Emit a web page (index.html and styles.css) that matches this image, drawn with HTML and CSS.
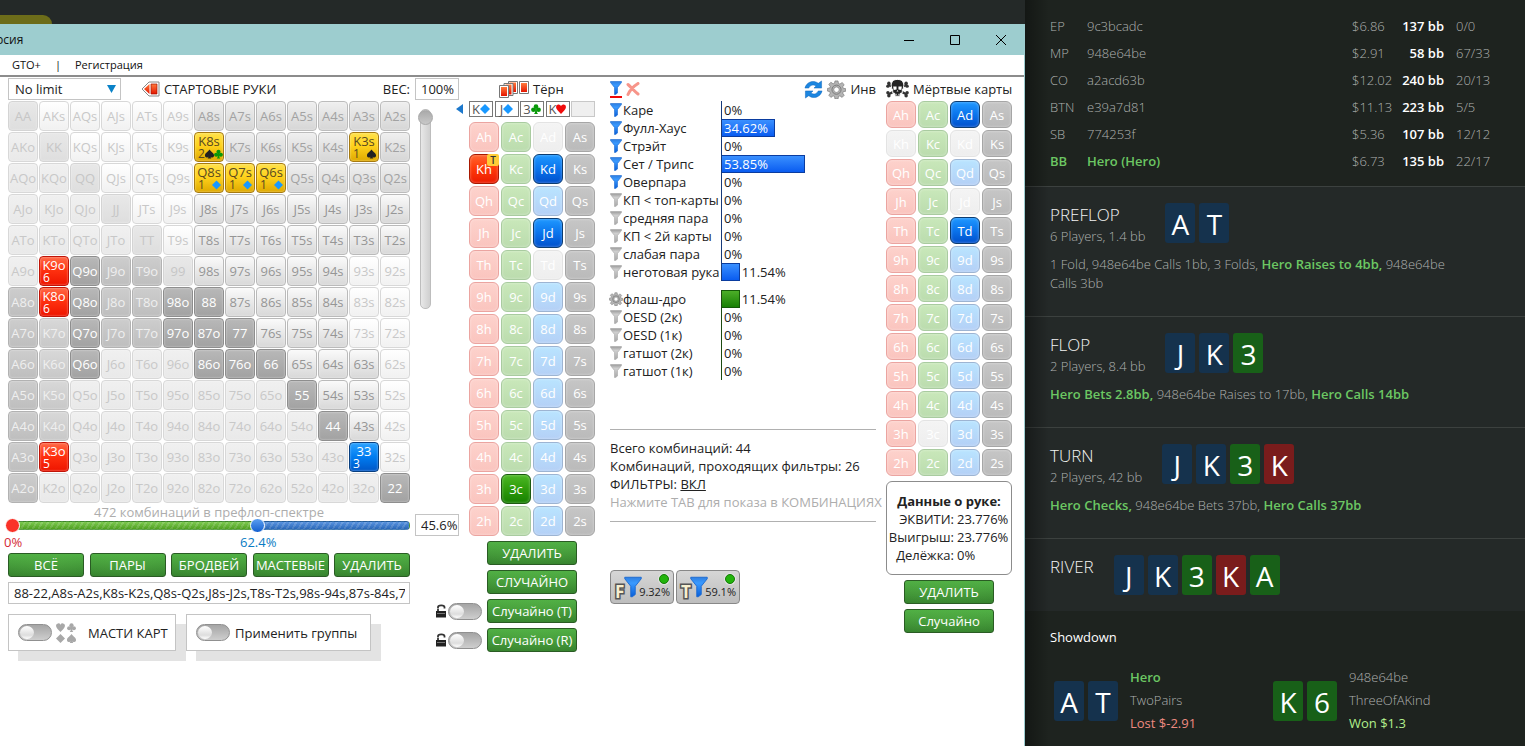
FILE: index.html
```html
<!DOCTYPE html>
<html lang="ru">
<head>
<meta charset="utf-8">
<title>Эквити калькулятор</title>
<link rel="stylesheet" href="styles.css">
</head>
<body>
<svg class="defs" aria-hidden="true">
  <defs>
    <linearGradient id="g-blue" x1="0" y1="0" x2="0" y2="1"><stop offset="0" stop-color="#2f7fe0"/><stop offset=".3" stop-color="#3a9aff"/><stop offset="1" stop-color="#0a5fd8"/></linearGradient>
    <linearGradient id="g-grey" x1="0" y1="0" x2="0" y2="1"><stop offset="0" stop-color="#9a9a9a"/><stop offset=".3" stop-color="#cfcfcf"/><stop offset="1" stop-color="#a8a8a8"/></linearGradient>
    <linearGradient id="g-red" x1="0" y1="0" x2="0" y2="1"><stop offset="0" stop-color="#ff7a3c"/><stop offset="1" stop-color="#e41500"/></linearGradient>
  </defs>
  <symbol id="diamond" viewBox="0 0 10 10"><path d="M5 0 10 5 5 10 0 5Z"/></symbol>
  <symbol id="heart" viewBox="0 0 10 10"><path d="M5 10C3 7.500 0 5.500 0 3A2.600 2.600 0 0 1 5 2 2.600 2.600 0 0 1 10 3C10 5.500 7 7.500 5 10Z"/></symbol>
  <symbol id="club" viewBox="0 0 10 10"><circle cx="5" cy="2.500" r="2.300"/><circle cx="2.400" cy="5.800" r="2.300"/><circle cx="7.600" cy="5.800" r="2.300"/><path d="M4.300 4h1.400L6 8.500 7 10H3L4 8.500Z"/></symbol>
  <symbol id="spade" viewBox="0 0 10 10"><path d="M5 0C6.500 2.500 10 4 10 6.300A2.300 2.300 0 0 1 5.600 7.500L7 10H3L4.400 7.500A2.300 2.300 0 0 1 0 6.300C0 4 3.500 2.500 5 0Z"/></symbol>
  <symbol id="funnel" viewBox="0 0 12 14"><path d="M.5.5h11v1L7.500 6.500v5.500l-2 1.500h-1v-7L.5 1.500Z"/></symbol>
  <symbol id="gear" viewBox="0 0 20 20"><path fill-rule="evenodd" d="M8.400 1h3.200l.5 2.700 1.500.6 2.300-1.600 2.200 2.200-1.600 2.300.6 1.500 2.700.5v2.600l-2.700.5-.6 1.500 1.600 2.300-2.200 2.200-2.300-1.600-1.500.6-.5 2.700H8.400l-.5-2.700-1.500-.6-2.300 1.600-2.200-2.200 1.600-2.300-.6-1.500L.4 11.600V8.900l2.500-.5.6-1.500L1.900 4.600l2.200-2.200 2.300 1.600 1.500-.6ZM10 7.300a2.900 2.900 0 1 0 0 5.800 2.900 2.900 0 0 0 0-5.800Z"/><circle cx="10" cy="10.200" r="4.800" fill="none" stroke-width="1"/></symbol>
  <symbol id="lock" viewBox="0 0 12 14"><path d="M1 7h10v6.500H1Z" fill="#222"/><path d="M2 9.500h8" stroke="#777"/><path d="M3 7V5M3 4.500V3.200C3 .8 9.500.8 9.500 3.200V4.500" fill="none" stroke="#333" stroke-width="1.800"/></symbol>
</svg>

<div class="desktop">
  <div class="backdrop">
    <div class="tab-hint"></div>
    <main class="window">
      <header class="titlebar">
        <span class="caption">рсия</span>
        <div class="window-buttons">
          <button aria-label="Свернуть"><svg viewBox="0 0 10 10"><path d="M0 5.500h10"/></svg></button>
          <button aria-label="Развернуть"><svg viewBox="0 0 10 10"><path d="M.5.5h9v9h-9Z"/></svg></button>
          <button aria-label="Закрыть"><svg viewBox="0 0 10 10"><path d="M0 0 10 10M10 0 0 10"/></svg></button>
        </div>
      </header>
      <nav class="menubar"><a href="#gto">GTO+</a><span>|</span><a href="#reg">Регистрация</a></nav>

      <div class="workspace">
        <section class="range-col">
          <div class="head range-head">
            <select aria-label="Лимит"><option>No limit</option></select>
            <svg class="hand-icon" viewBox="0 0 19 16"><path d="M8 1 1 8l7 7h10V1Z" fill="#fff" stroke="#888"/><path d="M8.500 3v10L3 8Z" fill="url(#g-red)"/><path d="M10 3h6v10h-6Z" fill="url(#g-red)" stroke="#a41200" stroke-width=".7"/></svg>
            <h2>СТАРТОВЫЕ РУКИ</h2>
            <label class="weight-label" for="weight">ВЕС:</label>
          </div>
          <div class="matrix" id="matrix"></div>
          <p class="combo-count">472 комбинаций в префлоп-спектре</p>
          <div class="band">
            <div class="band-track"></div>
            <input class="low" type="range" min="0" max="100" value="0" aria-label="Нижняя граница">
            <input class="high" type="range" min="0" max="100" step="0.1" value="62.4" aria-label="Верхняя граница">
          </div>
          <div class="band-labels"><span class="low-text">0%</span><span class="high-text">62.4%</span></div>
          <div class="presets">
            <button class="green">ВСЁ</button><button class="green">ПАРЫ</button><button class="green">БРОДВЕЙ</button><button class="green">МАСТЕВЫЕ</button><button class="green">УДАЛИТЬ</button>
          </div>
          <input class="field range-text" aria-label="Спектр" value="88-22,A8s-A2s,K8s-K2s,Q8s-Q2s,J8s-J2s,T8s-T2s,98s-94s,87s-84s,76s-74s">
          <div class="options">
            <label class="option suits-option"><input type="checkbox" class="switch">
              <span class="suit-set"><svg><use href="#heart"/></svg><svg><use href="#club"/></svg><svg><use href="#diamond"/></svg><svg><use href="#spade"/></svg></span>
              <span>МАСТИ КАРТ</span></label>
            <label class="option group-option"><input type="checkbox" class="switch"><span>Применить группы</span></label>
          </div>
        </section>

        <section class="board-area">
          <div class="board-top">
            <div class="weight-col">
              <input class="field percent" id="weight" value="100%">
              <input class="weight-slider" type="range" min="0" max="100" value="100" aria-label="Вес">
              <input class="field percent" aria-label="Процент рук" value="45.6%">
            </div>
            <div class="board-col">
              <div class="head board-head">
                <svg viewBox="0 0 30 18"><g stroke="#777" fill="#fff"><path d="M9.500 1.500h9v12h-9Z"/><path d="M10.500 2.500h6.500v9.500h-6.500Z" fill="url(#g-red)" stroke="none"/><path d="M5 3.500h9v12H5Z"/><path d="M6.500 4.500h6v10h-6Z" fill="url(#g-red)" stroke="none"/><path d="M.5 5.500h9v12h-9Z"/><path d="M2 7h6v9H2Z" fill="url(#g-red)" stroke="none"/><path d="M20.500 1.500h9v12h-9Z"/><path d="M22 3h6v9h-6Z" fill="url(#g-red)" stroke="none"/></g></svg>
                <h2>Тёрн</h2>
              </div>
              <div class="board-cards">
                <button class="prev" aria-label="Назад"><svg viewBox="0 0 7 10"><path d="M7 0v10L0 5Z"/></svg></button>
                <span class="mini">K<svg class="blue"><use href="#diamond"/></svg></span>
                <span class="mini">J<svg class="blue"><use href="#diamond"/></svg></span>
                <span class="mini">3<svg class="grn"><use href="#club"/></svg></span>
                <span class="mini">K<svg class="red"><use href="#heart"/></svg></span>
                <span class="mini empty"></span>
              </div>
              <div class="deck board-deck" id="board-deck"></div>
            </div>
          </div>
          <div class="board-actions">
            <button class="green">УДАЛИТЬ</button>
            <button class="green">СЛУЧАЙНО</button>
            <label class="keep"><svg><use href="#lock"/></svg><input type="checkbox" class="switch" aria-label="Закрепить тёрн"></label><button class="green">Случайно (T)</button>
            <label class="keep"><svg><use href="#lock"/></svg><input type="checkbox" class="switch" aria-label="Закрепить ривер"></label><button class="green">Случайно (R)</button>
          </div>
        </section>

        <section class="filters">
          <div class="head filter-head">
            <button aria-label="Фильтр" class="icon-btn underline"><svg class="funnel on"><use href="#funnel"/></svg></button>
            <button aria-label="Сбросить" class="icon-btn"><svg class="clear" viewBox="0 0 14 14"><path d="M2 2.500C5 5 8 9 12 12M12 1.500C8 4 4 8 2 12.500"/></svg></button>
            <button aria-label="Обновить" class="icon-btn refresh"><svg viewBox="0 0 20 20"><path d="M1 8.500C2.500 2 10 -.5 15 3.500L18.500 1v7.500H10.500l2.200-2.200C9.800 4.300 6.500 5.200 5 8.500ZM19 11.500C17.500 18 10 20.500 5 16.500L1.500 19v-7.500h8l-2.200 2.200c2.900 2 6.200 1.100 7.700-2.200Z"/></svg></button>
            <button aria-label="Настройки" class="icon-btn"><svg class="gear"><use href="#gear"/></svg></button>
            <button class="icon-btn">Инв</button>
          </div>
          <div class="stats" id="made"></div>
          <div class="stats draws" id="draws"></div>
          <div class="summary">
            <p>Всего комбинаций: 44</p>
            <p>Комбинаций, проходящих фильтры: 26</p>
            <p>ФИЛЬТРЫ: <a href="#filters">ВКЛ</a></p>
            <p class="hint">Нажмите TAB для показа в КОМБИНАЦИЯХ</p>
          </div>
          <div class="street-buttons">
            <button><b>F</b><svg class="funnel on"><use href="#funnel"/></svg><span>9.32%</span><i></i></button>
            <button><b>T</b><svg class="funnel on"><use href="#funnel"/></svg><span>59.1%</span><i></i></button>
          </div>
        </section>

        <section class="dead">
          <div class="head dead-head">
            <svg viewBox="0 0 24 20"><path d="M2 5 22 16M22 5 2 16" stroke="#333" stroke-width="2.500" fill="none"/><g fill="#333"><circle cx="3" cy="4" r="1.800"/><circle cx="2" cy="7" r="1.800"/><circle cx="21" cy="4" r="1.800"/><circle cx="22" cy="7" r="1.800"/><circle cx="2" cy="14" r="1.800"/><circle cx="3" cy="17" r="1.800"/><circle cx="22" cy="14" r="1.800"/><circle cx="21" cy="17" r="1.800"/></g><path d="M12 0c5 0 6.500 3 6.500 6.500 0 2-.6 3.500-1.500 4.500v3l-2 .5-.5 3h-5L9 14.500 7 14v-3C6 10 5.500 8.500 5.500 6.500 5.500 3 7 0 12 0Z" fill="#222" stroke="#fff" stroke-width="1"/><path d="M7.500 7.500h3.500v3l-3 .5ZM16.500 7.500H13v3l3 .5ZM11 12.500l1-1.500 1 1.500ZM10 15h1v1.500h-1ZM13 15h1v1.500h-1Z" fill="#fff"/></svg>
            <h2>Мёртвые карты</h2>
          </div>
          <div class="deck dead-deck" id="dead-deck"></div>
          <div class="hand-info">
            <h3>Данные о руке:</h3>
            <dl><dt>ЭКВИТИ:</dt><dd>23.776%</dd><dt>Выигрыш:</dt><dd>23.776%</dd><dt>Делёжка:</dt><dd>0%</dd></dl>
          </div>
          <div class="dead-actions"><button class="green">УДАЛИТЬ</button><button class="green">Случайно</button></div>
        </section>
      </div>
    </main>
  </div>

  <aside class="history" lang="en">
    <div class="players">
      <table>
        <tr><td>EP</td><td>9c3bcadc</td><td>$6.86</td><td>137 bb</td><td>0/0</td></tr>
        <tr><td>MP</td><td>948e64be</td><td>$2.91</td><td>58 bb</td><td>67/33</td></tr>
        <tr><td>CO</td><td>a2acd63b</td><td>$12.02</td><td>240 bb</td><td>20/13</td></tr>
        <tr><td>BTN</td><td>e39a7d81</td><td>$11.13</td><td>223 bb</td><td>5/5</td></tr>
        <tr><td>SB</td><td>774253f</td><td>$5.36</td><td>107 bb</td><td>12/12</td></tr>
        <tr class="hero-row"><td>BB</td><td>Hero (Hero)</td><td>$6.73</td><td>135 bb</td><td>22/17</td></tr>
      </table>
    </div>
    <section class="street">
      <div class="street-head"><div><h2>PREFLOP</h2><p>6 Players, 1.4 bb</p></div><div class="cards"><span class="d">A</span><span class="d">T</span></div></div>
      <p class="log">1 Fold, 948e64be Calls 1bb, 3 Folds, <b>Hero Raises to 4bb,</b> 948e64be Calls 3bb</p>
    </section>
    <section class="street">
      <div class="street-head"><div><h2>FLOP</h2><p>2 Players, 8.4 bb</p></div><div class="cards"><span class="d">J</span><span class="d">K</span><span class="c">3</span></div></div>
      <p class="log"><b>Hero Bets 2.8bb,</b> 948e64be Raises to 17bb, <b>Hero Calls 14bb</b></p>
    </section>
    <section class="street">
      <div class="street-head"><div><h2>TURN</h2><p>2 Players, 42 bb</p></div><div class="cards"><span class="d">J</span><span class="d">K</span><span class="c">3</span><span class="h">K</span></div></div>
      <p class="log"><b>Hero Checks,</b> 948e64be Bets 37bb, <b>Hero Calls 37bb</b></p>
    </section>
    <section class="street river">
      <div class="street-head"><div><h2>RIVER</h2></div><div class="cards"><span class="d">J</span><span class="d">K</span><span class="c">3</span><span class="h">K</span><span class="c">A</span></div></div>
    </section>
    <section class="showdown">
      <h3>Showdown</h3>
      <div class="results">
        <div class="result"><div class="cards"><span class="d">A</span><span class="d">T</span></div><div><p class="hero">Hero</p><p>TwoPairs</p><p class="lost">Lost $-2.91</p></div></div>
        <div class="result"><div class="cards"><span class="c">K</span><span class="c">6</span></div><div><p>948e64be</p><p>ThreeOfAKind</p><p class="won">Won $1.3</p></div></div>
      </div>
    </section>
  </aside>
</div>
<script src="app.js"></script>
</body>
</html>
```
FILE: app.js
```js
const ranks = 'AKQJT98765432';

// One letter per hand: p f o = outside the range (pair, suited, offsuit),
// t s = suited in range, l m n = grey shades, y r b = live combos.
const shades = [
  'pfffffttttttt',
  'opffffyttttyt',
  'oopfffyyytttt',
  'ooopffsssssss',
  'oooopfsssssss',
  'ornmmpsssssff',
  'mrnmmnnssssff',
  'mlnmmnnnsssff',
  'mlnooonnnsssf',
  'mlooooooonssf',
  'mloooooooonsf',
  'mrooooooooobf',
  'mooooooooooon'
];
const live = {
  K8s: ['2', 'spade', 'club'], K3s: ['1', 'spade'],
  Q8s: ['1', 'diamond'], Q7s: ['1', 'diamond'], Q6s: ['1', 'diamond'],
  K9o: ['6'], K8o: ['6'], K3o: ['5'], 33: ['3']
};

const icon = (name, cls = name) => `<svg class="${cls}"><use href="#${name}"/></svg>`;

document.getElementById('matrix').innerHTML = shades.map((row, r) =>
  [...row].map((shade, c) => {
    const hand = r === c ? ranks[r] + ranks[r]
      : r < c ? ranks[r] + ranks[c] + 's' : ranks[c] + ranks[r] + 'o';
    const extra = live[hand];
    const body = extra
      ? `<span>${hand}</span><small>${extra[0]}<em>${extra.slice(1).map(s => icon(s)).join('')}</em></small>`
      : hand;
    return `<button class="hand ${shade}">${body}</button>`;
  }).join('')).join('');

function deck(id, picked, blocked, tag) {
  document.getElementById(id).innerHTML = [...ranks].map(rank =>
    [...'hcds'].map(suit => {
      const card = rank + suit;
      const state = picked.includes(card) ? 'picked' : blocked.includes(card) ? 'blocked' : '';
      return `<button class="card ${suit} ${state}">${card}${card === tag ? '<sup>T</sup>' : ''}</button>`;
    }).join('')).join('');
}
deck('board-deck', ['Kh', 'Kd', 'Jd', '3c'], ['Ad', 'Td'], 'Kh');
deck('dead-deck', ['Ad', 'Td'], ['Kh', 'Kd', 'Jd', '3c']);

function stats(id, rows) {
  document.getElementById(id).innerHTML = rows.map(([name, value, sign]) => {
    const mark = sign === 'gear' ? icon('gear', 'gear small') : icon('funnel', 'funnel ' + (sign || ''));
    const bar = value ? `<div class="bar" style="width:${value}%"></div>` : '';
    return `<div class="stat">${mark}<span class="name">${name}</span><div class="meter">${bar}<span class="value${value > 20 ? ' inside' : ''}">${value}%</span></div></div>`;
  }).join('');
}
stats('made', [
  ['Каре', 0, 'on'], ['Фулл-Хаус', 34.62, 'on'], ['Стрэйт', 0, 'on'],
  ['Сет / Трипс', 53.85, 'on'], ['Оверпара', 0, 'on'], ['КП &lt; топ-карты', 0],
  ['средняя пара', 0], ['КП &lt; 2й карты', 0], ['слабая пара', 0], ['неготовая рука', 11.54]
]);
stats('draws', [
  ['флаш-дро', 11.54, 'gear'], ['OESD (2к)', 0], ['OESD (1к)', 0],
  ['гатшот (2к)', 0], ['гатшот (1к)', 0]
]);
```
FILE: styles.css
```css
* { box-sizing: border-box; }
body { margin: 0; background: #1e231f; color: #222; font: 13px/18px "Open Sans", "Noto Sans", sans-serif; }
h2, h3, p, dl, dd { margin: 0; font: inherit; }
button, input, select { font: inherit; color: inherit; margin: 0; }
button { padding: 0; cursor: pointer; }
.defs { position: absolute; width: 0; height: 0; }

.desktop { display: grid; grid-template-columns: minmax(0, 41fr) minmax(0, 20fr); min-height: 100vh; }
.backdrop { display: flex; flex-direction: column; padding-top: 15px; background: #242928; }
.tab-hint { width: 52px; height: 9px; background: #6c6c19; border-radius: 0 12px 0 0; }
.window { flex: 1; background: #fff; border-right: 1px solid #9dcccf; }

.titlebar { display: flex; align-items: center; justify-content: space-between; height: 31px; background: #9dcdcf; color: #111; font-size: 12px; }
.caption { margin-left: -4px; }
.window-buttons { display: flex; gap: 1px; margin-right: 1px; }
.window-buttons button { display: flex; align-items: center; justify-content: center; width: 45px; height: 31px; border: 0; background: none; }
.window-buttons svg { width: 10px; height: 10px; fill: none; stroke: #000; overflow: visible; }
.menubar { display: flex; gap: 14px; height: 20px; padding-left: 12px; font-size: 11px; line-height: 20px; color: #111; }
.menubar a { color: inherit; text-decoration: none; }

.workspace { display: flex; border-top: 2px solid #8c8c8c; padding: 1px 12px 0 8px; }
.head { display: flex; align-items: center; height: 22px; white-space: nowrap; }
.field { height: 22px; padding: 0 4px 0 5px; border: 1px solid #c4c4c4; background: #fff; outline: 0; }

.range-col { width: 402px; flex: none; }
.range-head { gap: 4px; }
.range-head select { appearance: none; width: 113px; height: 22px; margin-right: 16px; padding: 0 6px; border: 1px solid #c4c4c4; background: url("data:image/svg+xml,%3Csvg xmlns='http://www.w3.org/2000/svg' width='9' height='8'%3E%3Cpath d='M0 0h9L4.5 8Z' fill='%230a82c8'/%3E%3C/svg%3E") no-repeat right 4px center #fff; }
.hand-icon { width: 19px; height: 16px; }
.weight-label { margin-left: auto; }
.matrix { display: grid; grid-template-columns: repeat(13, 30px); gap: 1px; margin-top: 1px; }
.hand { height: 30px; border: 1px solid; border-radius: 4px; line-height: 16px; white-space: nowrap; box-shadow: inset 0 0 2px rgba(255,255,255,.6); font-size: 13px; }
.hand.p { background: linear-gradient(#e8e8e8, #dedede); border-color: #d4d4d4; color: #c6c6c6; }
.hand.f { background: linear-gradient(#fff, #f1f1f1); border-color: #d8d8d8; color: #c8c8c8; }
.hand.o { background: linear-gradient(#f0f0f0, #e9e9e9); border-color: #d8d8d8; color: #c8c8c8; }
.hand.t { background: linear-gradient(#efefef, #d6d6d6); border-color: #bcbcbc; color: #a2a2a2; }
.hand.s { background: linear-gradient(#fafafa, #d8d8d8); border-color: #bababa; color: #969696; }
.hand.l { background: linear-gradient(#d8d8d8, #c8c8c8); border-color: #c0c0c0; color: #efefef; }
.hand.m { background: linear-gradient(#cdcdcd, #bebebe); border-color: #b2b2b2; color: #efefef; }
.hand.n { background: linear-gradient(#b8b8b8, #a2a2a2); border-color: #8e8e8e; color: #fff; }
.hand.y { background: linear-gradient(#ffe14a, #ffd21c 45%, #dfa900); border-color: #a67a10; color: #5a4a20; }
.hand.r { background: linear-gradient(#ff6a48, #ff3210 45%, #ee1500); border-color: #c01408; color: #fff; }
.hand.b { background: linear-gradient(#2aa2ff, #007cf0 50%, #0057c8); border-color: #083f80; color: #fff; }
.hand span { display: block; line-height: 14px; }
.hand small { display: flex; justify-content: space-between; padding: 0 2px 0 3px; font-size: 12px; line-height: 12px; }
.hand em { display: flex; align-items: center; }
.hand em svg { width: 9px; height: 10px; fill: #222; }
.hand em .club { fill: #089808; }
.hand em .diamond { fill: #1898ff; }
.combo-count { height: 18px; color: #adadad; text-align: center; }
.band { position: relative; height: 9px; }
.band-track { height: 9px; border-radius: 4px; background: linear-gradient(rgba(255,255,255,.2), rgba(0,0,0,.15)), repeating-linear-gradient(120deg, transparent 0 3px, rgba(255,255,255,.16) 3px 5px), linear-gradient(90deg, #5cbc24 62%, #3079d8 62%); border: 1px solid rgba(0,50,60,.25); }
.band input { position: absolute; left: -3px; top: -3px; width: calc(100% + 6px); height: 15px; appearance: none; background: none; pointer-events: none; }
.band input::-webkit-slider-thumb { appearance: none; width: 15px; height: 15px; border: 1px solid #fff; border-radius: 50%; pointer-events: auto; }
.band .low::-webkit-slider-thumb { background: #fa3228; }
.band .high::-webkit-slider-thumb { background: linear-gradient(#5a9ff0, #1460d0); }
.band-labels { display: grid; grid-template-columns: 232px 1fr; height: 23px; padding-top: 3px; }
.low-text { margin-left: -4px; color: #d42a36; }
.high-text { color: #0a7cc4; }
.presets { display: flex; justify-content: space-between; }
.green { height: 24px; min-width: 76px; border: 1px solid #2a5c24; border-radius: 3px; background: radial-gradient(ellipse at 50% 40%, rgba(90,180,70,.3), transparent), linear-gradient(#50b045, #36822e); color: #fff; font-size: 13px; line-height: 20px; white-space: nowrap; }
.range-text { display: block; width: 100%; margin-top: 5px; }
.options { display: flex; gap: 10px; margin-top: 10px; }
.option { display: flex; align-items: center; height: 37px; border: 1px solid #c4c4c4; background: #fff; box-shadow: 10px 10px 0 #e3e3e3; white-space: nowrap; }
.suits-option { width: 168px; padding-left: 9px; }
.group-option { width: 185px; gap: 5px; padding-left: 9px; }
.suit-set { display: grid; grid-template-columns: 9px 9px; gap: 2px; margin: 0 12px 0 4px; }
.suit-set svg { width: 9px; height: 9px; fill: #a8a8a8; }
.switch { appearance: none; display: flex; width: 34px; height: 17px; padding: 1px; border: 1px solid #909090; border-radius: 9px; background: linear-gradient(#a5a5a5, #cecece); flex: none; }
.switch::before { content: ""; width: 14px; height: 13px; border-radius: 50%; background: linear-gradient(#fff, #ddd 70%, #fff); }

.board-area { width: 180px; flex: none; margin-left: 5px; }
.board-top { display: flex; justify-content: space-between; }
.weight-col { display: flex; flex-direction: column; align-items: flex-start; width: 45px; }
.percent { width: 44px; padding-right: 0; }
.percent:last-child { margin-top: auto; }
.weight-slider { appearance: none; writing-mode: vertical-lr; direction: rtl; width: 16px; height: 200px; margin: 9px 0 0 2px; background: none; }
.weight-slider::-webkit-slider-runnable-track { width: 11px; height: 200px; border: 1px solid #bdbdbd; border-radius: 5px; background: linear-gradient(90deg, #e8e8e8, #cfcfcf); }
.weight-slider::-webkit-slider-thumb { appearance: none; width: 15px; height: 15px; margin-left: -3px; border: 1px solid #a8a8a8; border-radius: 50%; background: linear-gradient(#aaa, #c8c8c8); }
.board-col { width: 126px; }
.board-head { gap: 4px; padding-left: 30px; }
.board-head svg { width: 30px; height: 18px; }
.board-cards { position: relative; display: flex; justify-content: space-between; height: 16px; margin: 1px 0 5px; }
.prev { position: absolute; left: -13px; top: 3px; width: 7px; height: 10px; border: 0; background: none; }
.prev svg { display: block; width: 7px; height: 10px; fill: #1c78cc; }
.mini { display: flex; align-items: center; justify-content: center; width: 24px; border: 1px solid #777; color: #555; font-size: 13px; }
.mini svg { width: 10px; height: 10px; }
.mini.empty { border-color: #c8c8c8; background: #efefef; }
.blue { fill: #1898ff; } .grn { fill: #089808; } .red { fill: #f00c0c; }
.deck { display: grid; grid-template-columns: repeat(4, 30px); column-gap: 2px; }
.board-deck { row-gap: 2px; }
.card { position: relative; height: 30px; border: 1px solid; border-radius: 6px; color: #fff; font-size: 13px; box-shadow: inset 0 0 3px rgba(255,255,255,.4); }
.card.h { background: linear-gradient(#fdd2cc, #fac4be); border-color: #eba4a0; }
.card.c { background: linear-gradient(#c9e8ba, #bbdcae); border-color: #a9cba0; }
.card.d { background: linear-gradient(#b9e4ff, #b4d0f6); border-color: #9db4d2; }
.card.s { background: linear-gradient(#c6c6c6, #bababa); border-color: #a6a6a6; }
.card.blocked { background: linear-gradient(#f4f4f4, #eee); border-color: #e3e3e3; }
.card.h.picked { background: linear-gradient(#ff6430, #ff3c0a 45%, #ec1a00); border-color: #a81800; }
.card.c.picked { background: linear-gradient(#4cb824, #2f9c0c 50%, #168000); border-color: #1c5a10; }
.card.d.picked { background: linear-gradient(#1f98ff, #0a74ec 50%, #0050cc); border-color: #0c3c70; }
.card sup { position: absolute; top: -1px; right: -1px; width: 12px; height: 12px; border-radius: 2px; background: #ffcc38; color: #333; font-size: 10px; line-height: 12px; font-weight: 600; }
.board-actions { display: grid; grid-template-columns: 48px 90px; gap: 5px 4px; margin: 5px 0 0 20px; align-items: center; }
.board-actions .green { grid-column: 2; }
.keep { display: flex; align-items: center; gap: 1px; grid-column: 1; }
.keep svg { width: 12px; height: 14px; }

.filters { flex: 1; min-width: 266px; margin-left: 15px; padding-right: 10px; }
.icon-btn { display: flex; align-items: center; border: 0; background: none; }
.filter-head { gap: 4px; }
.funnel { width: 12px; height: 14px; fill: url(#g-grey); stroke: #a8a8a8; stroke-width: .6; flex: none; }
.funnel.on { fill: url(#g-blue); stroke: #1a68d0; }
.underline { border-bottom: 2px solid #f00808; height: 17px; }
.clear { width: 14px; height: 14px; fill: none; stroke: #f7958a; stroke-width: 3; stroke-linecap: round; }
.refresh { margin-left: auto; }
.refresh svg { width: 19px; height: 19px; fill: #1c86e0; stroke: #0c62b8; stroke-width: .5; }
.gear { width: 19px; height: 19px; fill: #b4b4b4; stroke: #777; stroke-width: .7; flex: none; }
.gear.small { width: 14px; height: 14px; margin: 0 -1px; }
.stats { margin-top: 1px; }
.draws { margin-top: 9px; }
.stat { display: flex; align-items: center; height: 18px; white-space: nowrap; }
.name { width: 99px; padding-left: 1px; }
.meter { display: flex; align-items: center; flex: 1; height: 18px; border-left: 1px solid #173a7a; position: relative; }
.bar { flex: none; height: 18px; border: 1px solid #0a3ca0; border-left: 0; background: linear-gradient(#3a90ff, #0a5cf0); }
.draws .meter { border-color: #1c4a10; }
.draws .bar { border-color: #145a08; background: linear-gradient(#4cae28, #188004); }
.value { padding-left: 2px; }
.value.inside { position: absolute; left: 0; color: #fff; }
.summary { margin-top: 49px; padding: 9px 0 10px; border: 1px solid #b0b0b0; border-width: 1px 0; white-space: nowrap; }
.summary a { color: inherit; }
.hint { color: #adadad; }
.street-buttons { display: flex; gap: 2px; margin-top: 48px; }
.street-buttons button { position: relative; width: 64px; height: 34px; border: 1px solid #888; border-radius: 4px; background: linear-gradient(#d6d6d6, #bdbdbd); }
.street-buttons b { position: absolute; left: 4px; bottom: 1px; color: #f7efcf; font-size: 17px; line-height: 20px; -webkit-text-stroke: 3px #555; paint-order: stroke fill; }
.street-buttons .funnel { position: absolute; left: 13px; top: 5px; width: 18px; height: 22px; }
.street-buttons span { position: absolute; right: 3px; bottom: 3px; font-size: 11px; line-height: 16px; }
.street-buttons i { position: absolute; right: 4px; top: 3px; width: 10px; height: 10px; border: 1px solid #157a08; border-radius: 50%; background: #22b40c; box-shadow: 0 0 0 1px #e4e4e4; }

.dead { width: 126px; flex: none; }
.dead-head { gap: 4px; }
.dead-head svg { width: 23px; height: 20px; flex: none; }
.dead-deck { row-gap: 2px; margin-top: 1px; }
.dead-deck .card { height: 27px; }
.hand-info { height: 94px; margin-top: 5px; padding-top: 10px; border: 1px solid #8c8c8c; border-radius: 6px; white-space: nowrap; }
.hand-info h3 { font-weight: 700; text-align: center; }
.hand-info dl { display: grid; grid-template-columns: 64px 1fr; column-gap: 3px; margin-left: 3px; }
.hand-info dt { justify-self: end; }
.dead-actions { display: flex; flex-direction: column; align-items: center; gap: 5px; margin-top: 5px; }
.dead-actions .green { width: 90px; }

.history { position: relative; color: #aeb1af; }
.history::before { content: ""; position: absolute; top: 0; bottom: 0; left: 0; width: 24px; background: linear-gradient(90deg, rgba(0,0,0,.35), transparent); }
.players { padding: 12px 24px 12px 25px; }
.players table { width: 100%; border-collapse: collapse; }
.players td { height: 27px; padding: 0; white-space: nowrap; }
.players td:nth-child(1) { width: 37px; }
.players td:nth-child(3) { width: 43px; }
.players td:nth-child(4) { width: 49px; color: #fff; font-weight: 600; text-align: right; }
.players td:nth-child(5) { width: 57px; padding-left: 12px; }
.players td:not(:nth-child(4)), .street p, .result p { font-weight: 300; }
.players .hero-row td:nth-child(-n+2), .history b, .result .hero { color: #6cc763; font-weight: 600; }
.street { padding: 16px 60px 23px 25px; border-top: 1px solid #3c413f; background: #242928; }
.street-head { display: flex; align-items: flex-start; gap: 20px; min-height: 44px; }
.street h2 { margin-top: 1px; color: #f2f3f2; font-size: 17px; line-height: 22px; font-weight: 300; }
.street-head p { line-height: 20px; }
.cards { display: flex; gap: 4px; }
.cards span { width: 30px; height: 40px; border-radius: 3px; color: #fff; font-size: 28px; line-height: 42px; text-align: center; }
.cards .d { background: #15324d; } .cards .c { background: #186018; } .cards .h { background: #7a1c1c; }
.log { margin-top: 8px; line-height: 19px; }
.river { padding-bottom: 16px; }
.river .street-head { min-height: 40px; }
.showdown { padding: 17px 25px 6px; }
.showdown h3 { color: #fff; }
.results { display: grid; grid-template-columns: 219px 1fr; margin-top: 20px; }
.result { display: flex; align-items: center; gap: 12px; padding-left: 4px; line-height: 23px; }
.result .lost { color: #ee8a80; font-weight: 400; }
.result .won { color: #b2f08c; font-weight: 500; }
```
